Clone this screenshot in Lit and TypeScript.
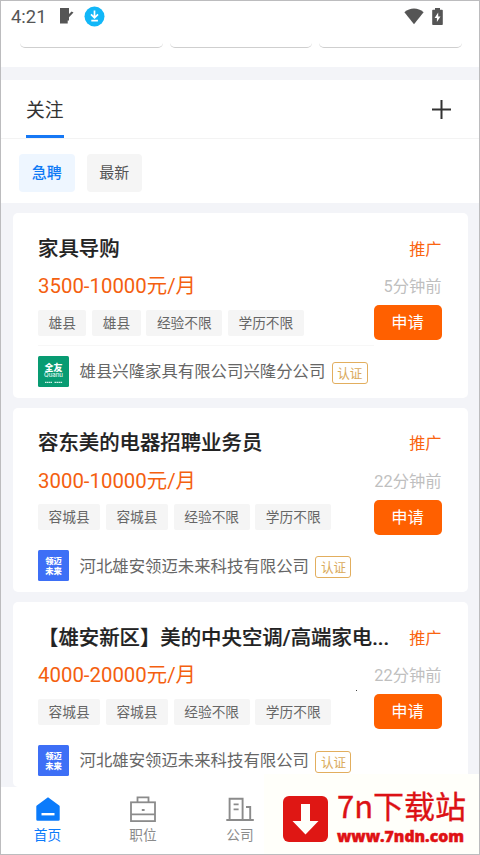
import { LitElement, html, css, svg } from "lit";
import { customElement, property } from "lit/decorators.js";

interface Job {
  title: string;
  pay: string;
  time: string;
  tags: string[];
  company: string;
  logo: "quanu" | "lingmai";
  ruled?: boolean;
}

const jobs: Job[] = [
  { title: "家具导购", pay: "3500-10000元/月", time: "5分钟前", tags: ["雄县", "雄县", "经验不限", "学历不限"], company: "雄县兴隆家具有限公司兴隆分公司", logo: "quanu", ruled: true },
  { title: "容东美的电器招聘业务员", pay: "3000-10000元/月", time: "22分钟前", tags: ["容城县", "容城县", "经验不限", "学历不限"], company: "河北雄安领迈未来科技有限公司", logo: "lingmai" },
  { title: "【雄安新区】美的中央空调/高端家电...", pay: "4000-20000元/月", time: "22分钟前", tags: ["容城县", "容城县", "经验不限", "学历不限"], company: "河北雄安领迈未来科技有限公司", logo: "lingmai" },
];

@customElement("job-card")
class JobCard extends LitElement {
  @property({ attribute: false }) job!: Job;

  static styles = css`
    :host { display: block; height: 184.4px; box-sizing: border-box; background: #fff; border-radius: 5px; padding: 0 26px 0 25px; }
    .row { display: flex; align-items: center; justify-content: space-between; white-space: nowrap; }
    .head { height: 71px; }
    .title { font-size: 20.4px; font-weight: 500; -webkit-text-stroke: 0.2px #222; color: #222; line-height: 30px; }
    .promo { font-size: 16.2px; color: #fa6410; line-height: 24px; padding-top: 2px; }
    .money { height: 24px; margin-top: -10px; }
    .pay { font-size: 20.4px; color: #f4600f; line-height: 24px; }
    .time { font-size: 16.3px; color: #bfbfbf; line-height: 24px; padding-top: 2px; }
    .mid { height: 35px; margin-top: 7px; }
    .tags { display: flex; gap: 5.8px; }
    .tag { background: #f5f5f5; color: #666; font-size: 13.7px; line-height: 26px; height: 26px; padding: 0 10.5px; border-radius: 2px; }
    .apply { width: 68px; height: 35px; border-radius: 5px; background: #ff6000; color: #fff; font-size: 16.3px; line-height: 35.5px; text-align: center; }
    .firm { display: flex; align-items: center; height: 50px; width: 336px; margin-top: 5px; border-top: 1px solid transparent; white-space: nowrap; }
    .ruled { border-top-color: #f7f7f7; }
    .name { margin-left: 10.5px; font-size: 16.4px; color: #666; line-height: 24px; padding-top: 2px; }
    .cert { margin: 3px 0 0 6.5px; box-sizing: border-box; width: 36px; height: 22px; border: 1px solid #e2ae5e; border-radius: 3px; color: #daaa5a; font-size: 12.6px; line-height: 21px; text-align: center; flex: none; }
    .logo { width: 31px; height: 31px; flex: none; display: block; }
    .lt { font-family: "Noto Sans CJK SC", sans-serif; font-weight: 900; fill: #fff; }
    .le { font-family: "Inter", sans-serif; font-weight: 500; fill: #e7faf4; }
  `;

  render() {
    const j = this.job;
    return html`
      <div class="row head"><div class="title">${j.title}</div><div class="promo">推广</div></div>
      <div class="row money"><div class="pay">${j.pay}</div><div class="time">${j.time}</div></div>
      <div class="row mid">
        <div class="tags">${j.tags.map((t) => html`<span class="tag">${t}</span>`)}</div>
        <div class="apply">申请</div>
      </div>
      <div class="firm ${j.ruled ? "ruled" : ""}">
        ${j.logo === "quanu"
          ? html`<svg class="logo" viewBox="0 0 31 31">
              <rect width="31" height="31" rx="1.5" fill="#089b72"/>
              <text class="lt" x="15.5" y="14.6" font-size="9" text-anchor="middle">全友</text>
              <text class="le" x="6" y="20.8" font-size="5.6" textLength="19" lengthAdjust="spacingAndGlyphs">Quanu</text>
              <path d="M7 26.3h7M16.5 26.3h8" stroke="#d2f1e8" stroke-width="1.3" stroke-dasharray="1.6 .4"/>
            </svg>`
          : html`<svg class="logo" viewBox="0 0 31 31">
              <rect width="31" height="31" rx="1.5" fill="#3d6ff6"/>
              <text class="lt" x="15.5" y="14.4" font-size="8.3" text-anchor="middle">领迈</text>
              <text class="lt" x="15.5" y="24" font-size="8.3" text-anchor="middle">未来</text>
            </svg>`}
        <span class="name">${j.company}</span><span class="cert">认证</span>
      </div>`;
  }
}

const navIcons = {
  home: svg`<path d="M14 2.2 25.2 10.4a1.2 1.2 0 0 1 .5 1V24.5a1.3 1.3 0 0 1-1.3 1.3H3.6a1.3 1.3 0 0 1-1.3-1.3V11.4a1.2 1.2 0 0 1 .5-1Z" fill="#0b7bfb"/><path d="M7.500 19.2h13" stroke="#fff" stroke-width="2.4"/>`,
  job: svg`<g fill="none" stroke="#8b8b8b" stroke-width="1.8"><rect x="2" y="7.3" width="24" height="18.8"/><path d="M8.5 7V2.4h11V7M2 19.3h24"/></g><rect x="12.8" y="14" width="2.8" height="2" fill="#8b8b8b"/>`,
  firm: svg`<g fill="none" stroke="#8b8b8b" stroke-width="1.9"><path d="M.3 25h27.5M3.6 25V3.8h13V25M20 12h4.2v13M7.6 9.4h5M7.6 14.4h5"/></g>`,
};

@customElement("app-root")
class AppRoot extends LitElement {
  static styles = css`
    :host { display: flex; flex-direction: column; position: relative; box-sizing: border-box; width: 480px; height: 855px; overflow: hidden; border: 1px solid #bcbcbe; background: #fff; font-family: Roboto, "Noto Sans CJK SC", sans-serif; }
    .status { flex: none; height: 34px; display: flex; align-items: center; padding: 0 36px 0 10px; box-sizing: border-box; color: #555; margin-bottom: -1px; }
    .clock { font-size: 18.4px; line-height: 30px; width: 48px; padding-bottom: 2px; }
    .sico { display: block; margin-bottom: 4px; }
    .dl { margin-left: 10px; }
    .wifi { margin-left: auto; }
    .batt { margin-left: 8px; }
    .boxes { flex: none; display: flex; gap: 7px; height: 46px; padding: 0 17.5px 0 19px; box-sizing: border-box; overflow: hidden; align-items: flex-start; }
    .box { flex: 1; height: 14px; box-sizing: border-box; border-bottom: 1px solid #cfcfcf; border-radius: 0 0 5px 5px; }
    .band { height: 12.6px; flex: none; background: #f3f4f8; margin-top: -13px; }
    .tabs { flex: none; height: 59px; display: flex; justify-content: space-between; padding: 0 28px 0 25px; box-sizing: border-box; border-bottom: 1px solid #f3f3f3; }
    .tab { font-size: 18.8px; line-height: 30px; padding-top: 16px; height: 58px; box-sizing: border-box; border-bottom: 3px solid #1678f5; color: #333; }
    .plus { display: block; margin-top: 20px; }
    .chips { flex: none; display: flex; gap: 12px; padding: 15px 0 0 18px; height: 64px; box-sizing: border-box; }
    .chip { width: 55.5px; height: 38px; line-height: 39.5px; border-radius: 4px; text-align: center; font-size: 15px; background: #f5f5f5; color: #555; }
    .on { background: #eef6ff; color: #0f7af5; font-weight: 500; }
    .list { flex: 1; min-height: 0; overflow: hidden; background: #f3f4f8; padding: 10.6px 11.5px 0 12px; display: flex; flex-direction: column; gap: 10.2px; }
    job-card { flex: none; }
    .nav { flex: none; height: 67px; display: flex; box-sizing: border-box; padding-top: 8px; background: #fff; }
    .item { width: 96px; display: flex; flex-direction: column; align-items: center; font-size: 13.7px; line-height: 20px; color: #8b8b8b; }
    .item.sel { color: #0b7bfb; width: 93px; }
    .item.mid { width: 98px; }
    .item svg { display: block; margin-bottom: 2px; }
    .mark { position: absolute; left: 263px; top: 773px; width: 216px; height: 81px; background: #fffffa; display: flex; padding: 22px 0 0 19px; box-sizing: border-box; }
    .words { margin: -9px 0 0 9px; color: #dc1114; }
    .cn { font-family: "Noto Sans CJK SC", sans-serif; font-size: 31px; line-height: 36px; height: 40px; font-weight: 400; -webkit-text-stroke: 0.35px #dc1114; white-space: nowrap; display: block; }
    .url { display: block; width: 132px; height: 20px; overflow: visible; }
    .ut { font-family: "Open Sans", sans-serif; font-weight: 800; font-size: 16px; fill: #df1114; stroke: #df1114; stroke-width: 0.5px; }
    .dot { position: absolute; left: 355px; top: 689px; width: 1px; height: 1px; background: #444; }
  `;

  render() {
    return html`
      <div class="status">
        <span class="clock">4:21</span>
        <svg class="sico" width="15" height="18" viewBox="0 0 15 18"><path d="M1 1h9v6l2.600-2.600L14.500 5.500 10 10.200V13.500h-1.300V16.500H1Z" fill="#555"/></svg>
        <svg class="sico dl" width="21" height="21" viewBox="0 0 21 21"><circle cx="10.500" cy="10.500" r="10" fill="#12b7f8"/><path d="M10.500 4.500v7M7 8.300l3.500 3.500L14 8.300M7.300 14.700h6.600" fill="none" stroke="#fff" stroke-width="1.7"/></svg>
        <svg class="sico wifi" width="20" height="17" viewBox="0 0 20 17"><path d="M.4 4.200C6-.6 14-.6 19.600 4.200L10 16.300Z" fill="#555"/></svg>
        <svg class="sico batt" width="11" height="17" viewBox="0 0 11 17"><path d="M3 0h5v1.700h2a.8.8 0 0 1 .8.800v13.700a.8.8 0 0 1-.8.800H1a.8.8 0 0 1-.8-.800V2.500a.8.8 0 0 1 .8-.800h2Z" fill="#555"/><path d="M6.200 4.500 2.600 10h2.300v4l3.600-5.600H6.200Z" fill="#fff"/></svg>
      </div>
      <div class="boxes"><div class="box"></div><div class="box"></div><div class="box"></div></div>
      <div class="band"></div>
      <div class="tabs">
        <div class="tab">关注</div>
        <svg class="plus" width="19" height="19" viewBox="0 0 19 19"><path d="M9.500 0v19M0 9.500h19" stroke="#333" stroke-width="2"/></svg>
      </div>
      <div class="chips"><div class="chip on">急聘</div><div class="chip">最新</div></div>
      <div class="list">${jobs.map((j) => html`<job-card .job=${j}></job-card>`)}</div>
      <div class="nav">
        <div class="item sel"><svg width="28" height="28" viewBox="0 0 28 28">${navIcons.home}</svg>首页</div>
        <div class="item mid"><svg width="28" height="28" viewBox="0 0 28 28">${navIcons.job}</svg>职位</div>
        <div class="item"><svg width="28" height="28" viewBox="0 0 28 28">${navIcons.firm}</svg>公司</div>
      </div>
      <i class="dot"></i>
      <div class="mark">
        <svg width="45" height="46" viewBox="0 0 45 46"><rect width="45" height="46" rx="6" fill="#df1714"/><path d="M18 8h9v17h8.500L22.500 38.500 9.500 25H18Z" fill="#fffffa"/></svg>
        <div class="words">
          <span class="cn">7n下载站</span>
          <svg class="url" viewBox="0 0 132 20"><text class="ut" x="0" y="14.500" textLength="127" lengthAdjust="spacingAndGlyphs">www.7ndn.com</text></svg>
        </div>
      </div>`;
  }
}
